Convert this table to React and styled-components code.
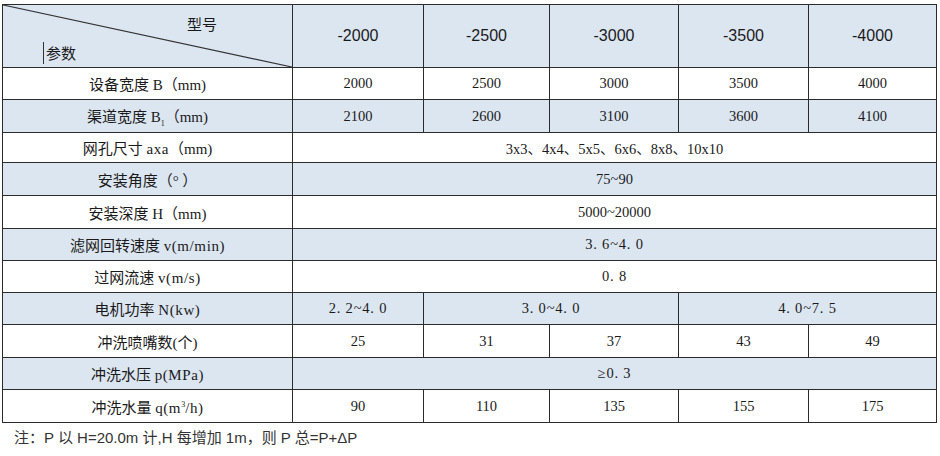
import React from 'react'
import styled, { createGlobalStyle } from 'styled-components'

const GlobalStyle = createGlobalStyle`
  html, body {
    margin: 0;
    padding: 0;
    background: #ffffff;
  }
  body {
    font-family: "Liberation Serif", "Noto Sans CJK SC", serif;
    color: #1a1a1a;
  }
`

const BLUE = '#dce6f1'
const LINE = '#2b2b2b'

const Page = styled.div`
  width: 940px;
  height: 456px;
  padding: 4px 0 0 2px;
  box-sizing: border-box;
`

const Table = styled.table`
  width: 934px;
  border-collapse: collapse;
  table-layout: fixed;
  border: 1px solid ${LINE};
`

const Row = styled.tr`
  height: ${p => p.$h}px;
  background: ${p => (p.$blue ? BLUE : '#ffffff')};
`

const HeadCell = styled.th`
  border: 1px solid ${LINE};
  padding: 0;
  font-family: "Liberation Sans", "Noto Sans CJK SC", sans-serif;
  font-weight: normal;
  font-size: 16px;
  color: #1a1a1a;
  text-align: center;
  vertical-align: middle;
`

const CornerCell = styled(HeadCell)`
  position: relative;
  font-family: "Noto Sans CJK SC", sans-serif;
  font-size: 15px;
`

const Diagonal = styled.svg`
  position: absolute;
  inset: 0;
  width: 100%;
  height: 100%;
`

const CornerTop = styled.span`
  position: absolute;
  left: 184px;
  top: 8px;
  line-height: 22px;
`

const CornerBottom = styled.span`
  position: absolute;
  left: 40px;
  top: 37px;
  line-height: 22px;
  padding-left: 2px;
  border-left: 1px solid #333;
`

const Label = styled.td`
  border: 1px solid ${LINE};
  padding: 0;
  text-align: center;
  vertical-align: middle;
  font-family: "Liberation Serif", "Noto Sans CJK SC", serif;
  font-size: 15px;
  color: #1a1a1a;
  white-space: nowrap;
`

const Latin = styled.span`
  font-family: "Liberation Serif", serif;
  font-size: 15px;
  letter-spacing: 0.6px;
`

const Value = styled.td`
  border: 1px solid ${LINE};
  padding: 0;
  text-align: center;
  vertical-align: middle;
  font-family: "Liberation Serif", "Noto Sans CJK SC", serif;
  font-size: 14.5px;
  letter-spacing: ${p => (p.$wide ? '0.8px' : '0')};
  color: #1a1a1a;
  white-space: nowrap;
`

const Note = styled.div`
  margin-top: 5px;
  padding-left: 12px;
  font-family: "Liberation Sans", "Noto Sans CJK SC", sans-serif;
  font-size: 15px;
  line-height: 20px;
  color: #333333;
`

const colWidths = [290, 131, 126, 129, 130, 128]

const rows = [
  {
    h: 32,
    label: <>设备宽度 B（mm)</>,
    cells: [['2000'], ['2500'], ['3000'], ['3500'], ['4000']],
  },
  {
    h: 33,
    blue: true,
    label: (
      <>
        渠道宽度 B<sub style={{ fontSize: '8px' }}>1</sub>（mm)
      </>
    ),
    cells: [['2100'], ['2600'], ['3100'], ['3600'], ['4100']],
  },
  {
    h: 30,
    label: (
      <>
        网孔尺寸 <Latin>axa</Latin>（mm)
      </>
    ),
    cells: [['3x3、4x4、5x5、6x6、8x8、10x10', 5]],
  },
  {
    h: 33,
    blue: true,
    label: <>安装角度（°  ）</>,
    cells: [['75~90', 5]],
  },
  {
    h: 33,
    label: <>安装深度 H（mm)</>,
    cells: [['5000~20000', 5]],
  },
  {
    h: 32,
    blue: true,
    label: (
      <>
        滤网回转速度 <Latin>v(m/min)</Latin>
      </>
    ),
    cells: [['3. 6~4. 0', 5, true]],
  },
  {
    h: 32,
    label: (
      <>
        过网流速 <Latin>v(m/s)</Latin>
      </>
    ),
    cells: [['0. 8', 5, true]],
  },
  {
    h: 32,
    blue: true,
    label: (
      <>
        电机功率 <Latin>N(kw)</Latin>
      </>
    ),
    cells: [
      ['2. 2~4. 0', 1, true],
      ['3. 0~4. 0', 2, true],
      ['4. 0~7. 5', 2, true],
    ],
  },
  {
    h: 33,
    label: <>冲洗喷嘴数(个)</>,
    cells: [['25'], ['31'], ['37'], ['43'], ['49']],
  },
  {
    h: 32,
    blue: true,
    label: (
      <>
        冲洗水压 <Latin>p(MPa)</Latin>
      </>
    ),
    cells: [['≥0. 3', 5, true]],
  },
  {
    h: 33,
    label: (
      <>
        冲洗水量 <Latin>q(m</Latin>
        <sup style={{ fontSize: '8px' }}>3</sup>
        <Latin>/h)</Latin>
      </>
    ),
    cells: [['90'], ['110'], ['135'], ['155'], ['175']],
  },
]

const models = ['-2000', '-2500', '-3000', '-3500', '-4000']

export default function App() {
  return (
    <Page>
      <GlobalStyle />
      <Table>
        <colgroup>
          {colWidths.map((w, i) => (
            <col key={`col-${i}`} style={{ width: w }} />
          ))}
        </colgroup>
        <thead>
          <Row $h={63} $blue>
            <CornerCell>
              <Diagonal viewBox="0 0 100 100" preserveAspectRatio="none">
                <line
                  x1="0"
                  y1="0"
                  x2="100"
                  y2="100"
                  stroke="#333"
                  strokeWidth="1.2"
                  vectorEffect="non-scaling-stroke"
                />
              </Diagonal>
              <CornerTop>型号</CornerTop>
              <CornerBottom>参数</CornerBottom>
            </CornerCell>
            {models.map(m => (
              <HeadCell key={m}>{m}</HeadCell>
            ))}
          </Row>
        </thead>
        <tbody>
          {rows.map((row, index) => (
            <Row key={`row-${index}`} $h={row.h} $blue={row.blue}>
              <Label>{row.label}</Label>
              {row.cells.map(([text, span = 1, wide], i) => (
                <Value key={`c-${index}-${i}`} colSpan={span} $wide={wide}>
                  {text}
                </Value>
              ))}
            </Row>
          ))}
        </tbody>
      </Table>
      <Note>注：P 以 H=20.0m 计,H 每增加 1m，则 P 总=P+ΔP</Note>
    </Page>
  )
}
